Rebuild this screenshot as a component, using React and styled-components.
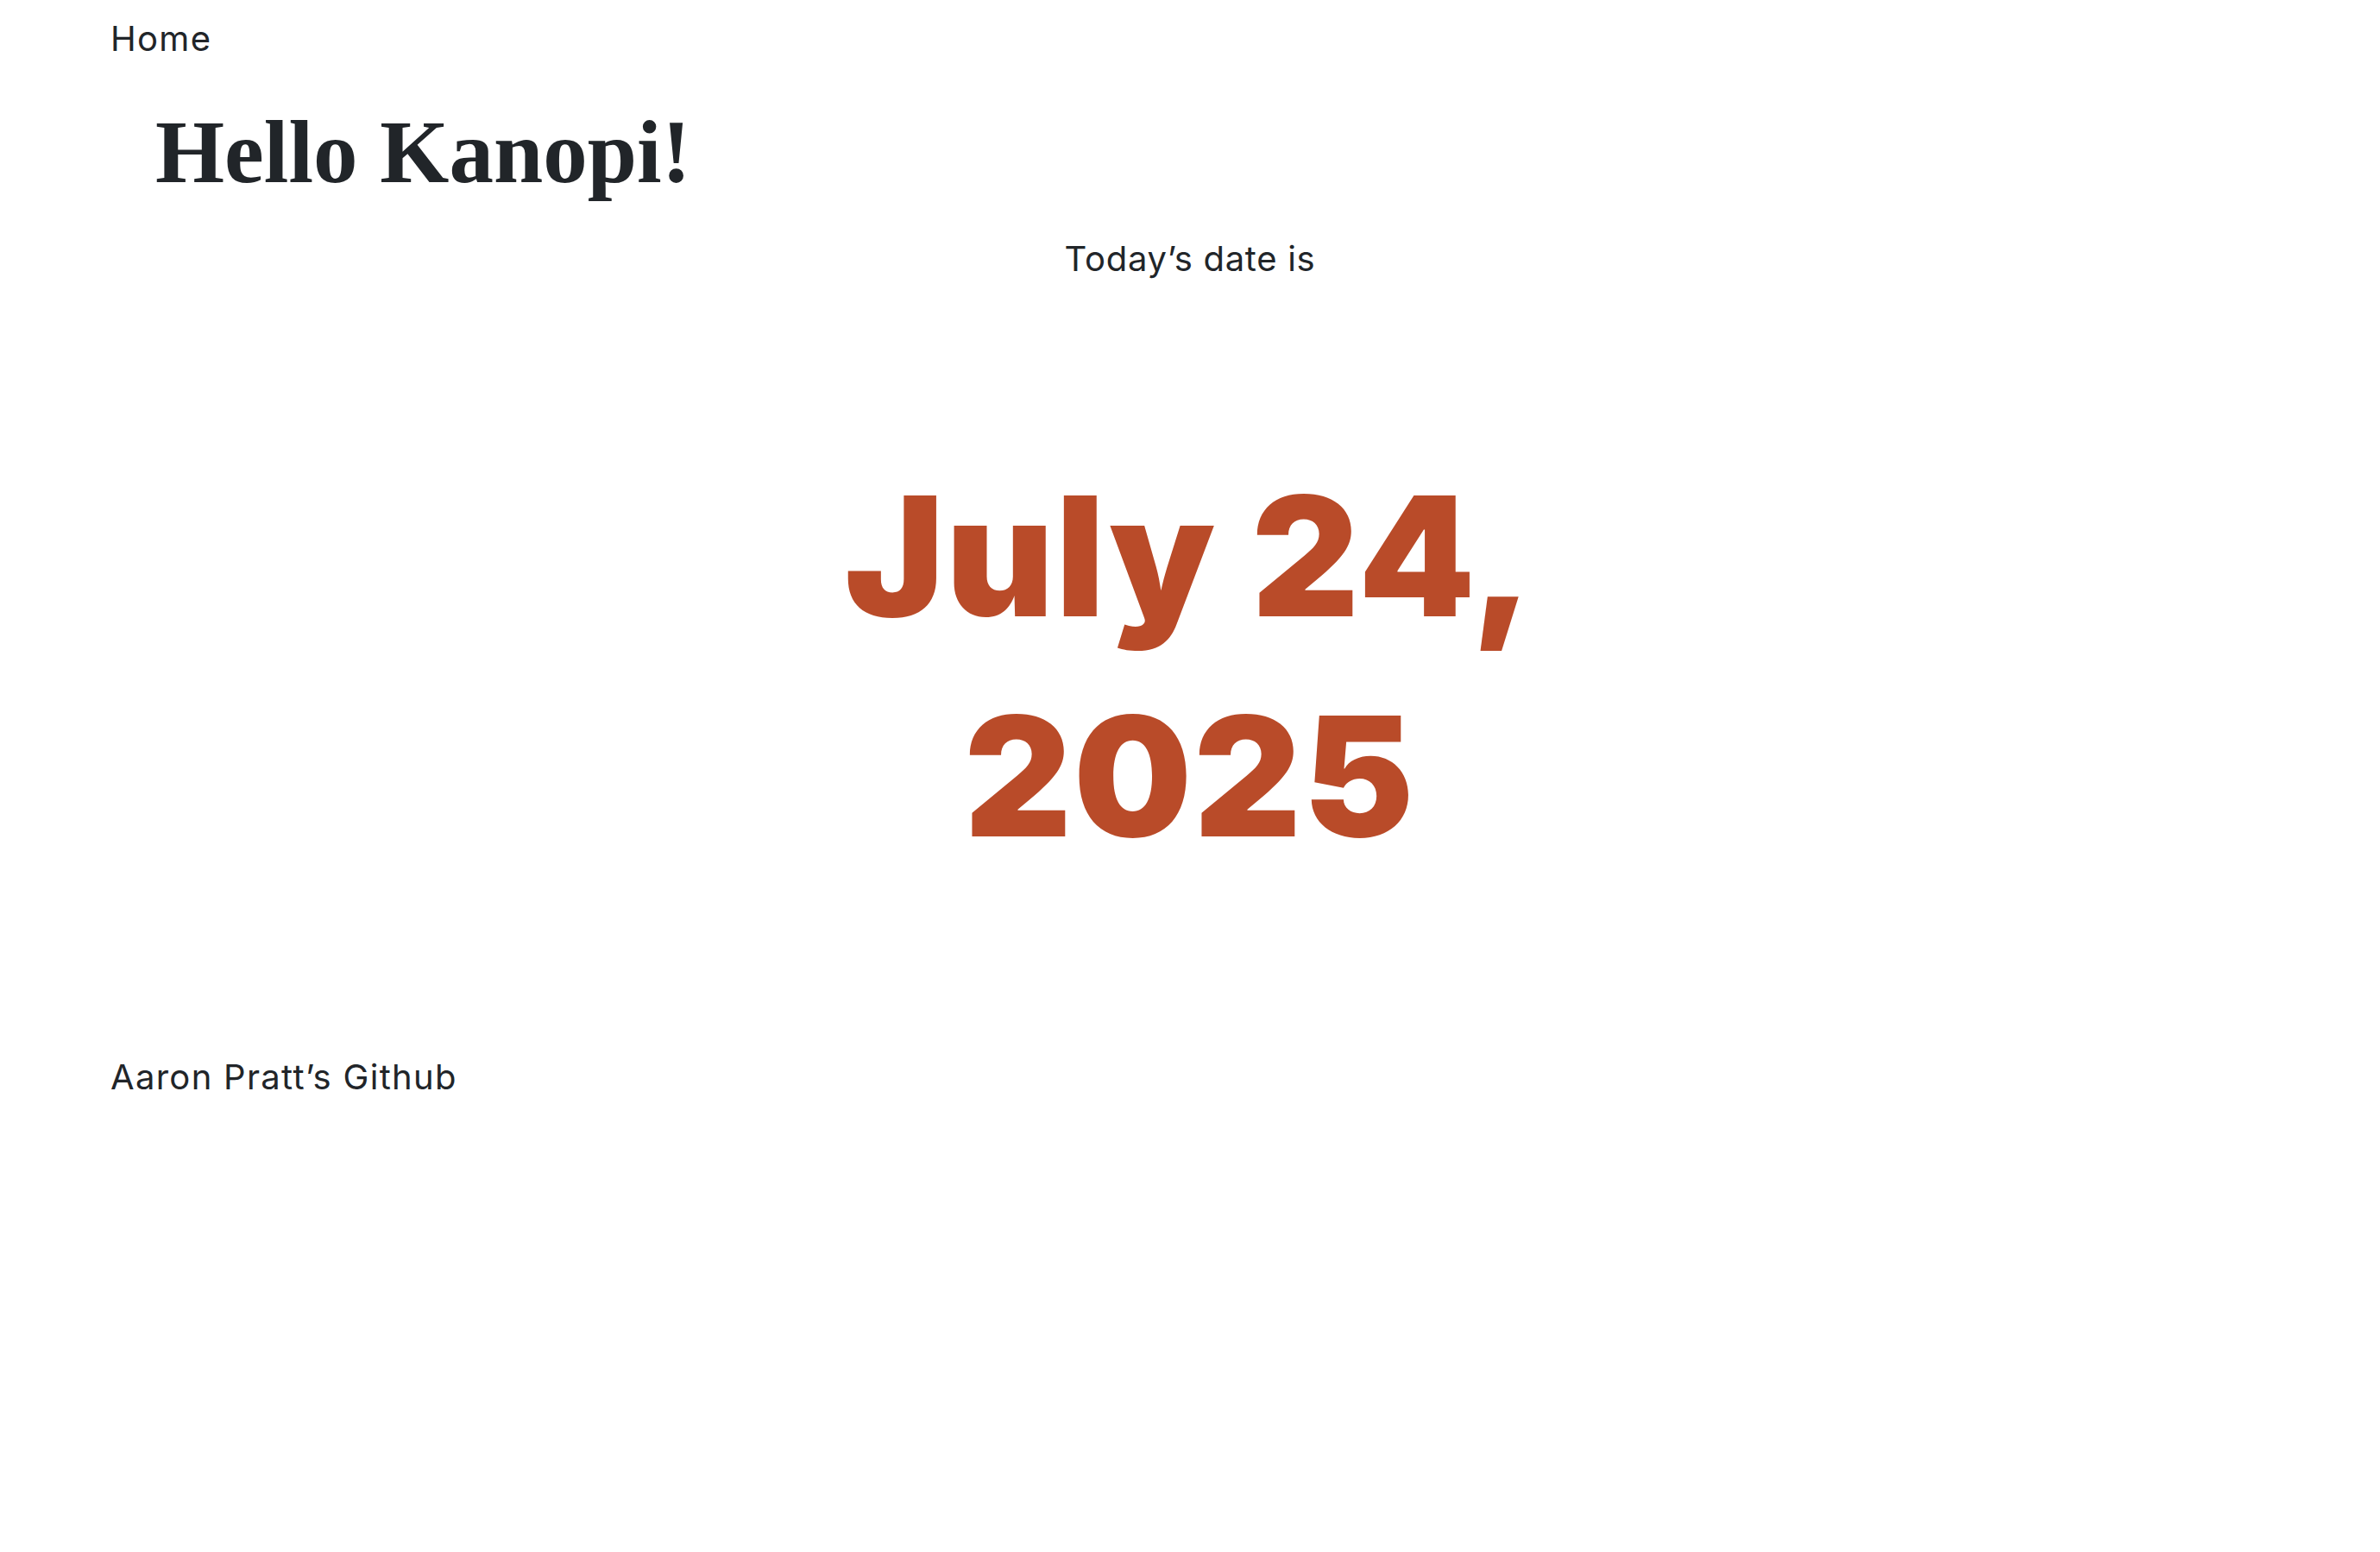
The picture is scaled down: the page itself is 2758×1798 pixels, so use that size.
import React from "react";
import styled, { createGlobalStyle } from "styled-components";

const GlobalStyle = createGlobalStyle`
  body {
    margin: 0;
    background: #ffffff;
    color: #212529;
    font-family: Inter, "Noto Sans", sans-serif;
  }
`;

const Page = styled.div`
  display: flex;
  flex-direction: column;
  min-height: 100vh;
`;

const Nav = styled.nav`
  padding: 15px 128px 0;
`;

const NavLink = styled.a`
  display: inline-block;
  font-size: 40px;
  line-height: 60px;
  letter-spacing: 1.3px;
  color: #212529;
  text-decoration: none;
`;

const Title = styled.h1`
  margin: 45px 0 0;
  padding-left: 180px;
  font-family: "Liberation Serif", "DejaVu Serif", serif;
  font-weight: 700;
  font-size: 103px;
  line-height: 113px;
  letter-spacing: 0;
  color: #212529;
`;

const Main = styled.main`
  display: flex;
  flex-direction: column;
  align-items: center;
  text-align: center;
`;

const Intro = styled.p`
  margin: 37px 0 0;
  font-size: 40px;
  line-height: 60px;
  letter-spacing: 0.7px;
`;

const DateText = styled.p`
  margin: 187px 0 0;
  max-width: 1000px;
  font-size: 193px;
  font-weight: 900;
  line-height: 255px;
  letter-spacing: 2px;
  color: #b94b29;
`;

const Footer = styled.footer`
  margin-top: 191px;
  padding: 0 128px;
`;

export default function App() {
  return (
    <Page>
      <GlobalStyle />
      <Nav>
        <NavLink href="#">Home</NavLink>
      </Nav>
      <Title>Hello Kanopi!</Title>
      <Main>
        <Intro>Today’s date is</Intro>
        <DateText>July 24, 2025</DateText>
      </Main>
      <Footer>
        <NavLink href="#">Aaron Pratt’s Github</NavLink>
      </Footer>
    </Page>
  );
}
